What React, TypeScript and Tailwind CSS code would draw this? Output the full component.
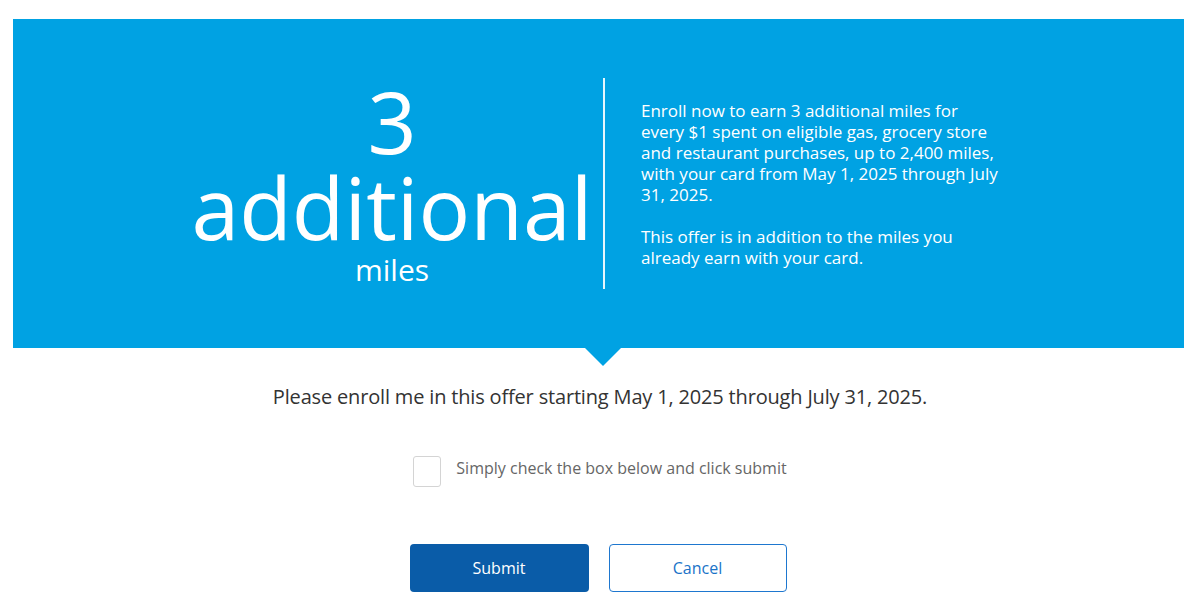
import { useState } from "react";

export default function App() {
  const [checked, setChecked] = useState(false);

  return (
    <div className="min-h-screen bg-white pt-[19px] font-['Open_Sans',sans-serif]">
      {/* offer banner */}
      <div className="ml-[13px] mr-[16px] bg-[#00a2e3] py-[59px] pl-[168px] text-white">
        <div className="flex items-center">
          <div className="w-[422px] text-center">
            <div className="text-[86px] leading-none">3</div>
            <div className="text-[86px] leading-none">additional</div>
            <div className="text-[30px] leading-[39px]">miles</div>
          </div>
          <div className="h-[211px] w-[2px] bg-white/90" />
          <div className="w-[396px] pl-[36px] text-[17px] leading-[21px]">
            <p>
              Enroll now to earn 3 additional miles for every $1 spent on eligible gas, grocery store and
              restaurant purchases, up to 2,400 miles, with your card from May 1, 2025 through July 31, 2025.
            </p>
            <p className="mt-[21px]">This offer is in addition to the miles you already earn with your card.</p>
          </div>
        </div>
      </div>
      <div className="flex justify-center pl-[6px]">
        <div className="h-0 w-0 border-x-[18px] border-t-[18px] border-x-transparent border-t-[#00a2e3]" />
      </div>

      {/* enroll form */}
      <h2 className="mt-[17px] text-center text-[20px] leading-[28px] font-medium tracking-[-0.17px] text-[#333]">
        Please enroll me in this offer starting May 1, 2025 through July 31, 2025.
      </h2>

      <label className="mt-[45px] flex cursor-pointer items-center justify-center gap-[15px]">
        <input
          type="checkbox"
          checked={checked}
          onChange={(e) => setChecked(e.target.checked)}
          className="h-[31px] w-[28px] appearance-none rounded-[3px] border border-[#d4d4d4] bg-white checked:bg-[#0a5da9]"
        />
        <span className="mb-[7px] text-[16px] text-[#666]">Simply check the box below and click submit</span>
      </label>

      <div className="mt-[57px] flex justify-center gap-[20px] pr-[4px]">
        <button className="h-[48px] w-[179px] rounded-[4px] bg-[#0a5ca8] text-[16px] text-white">Submit</button>
        <button className="h-[48px] w-[178px] rounded-[4px] border border-[#1e77cf] bg-white text-[16px] text-[#1a73c8]">
          Cancel
        </button>
      </div>
    </div>
  );
}
